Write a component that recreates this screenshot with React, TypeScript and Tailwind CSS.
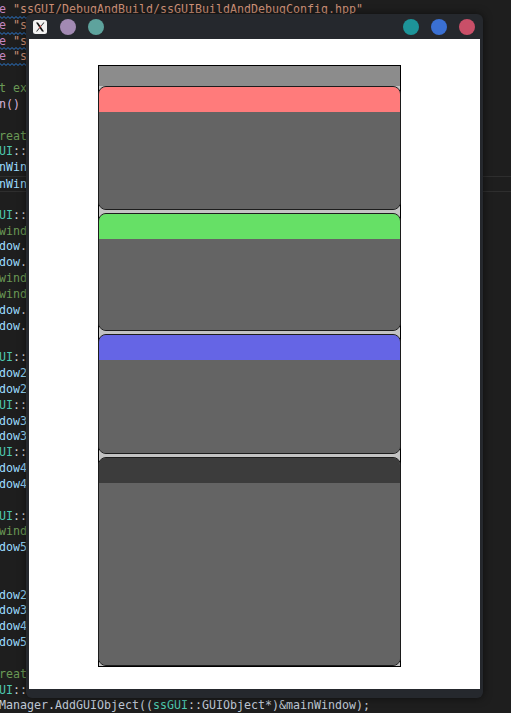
import React from "react";

type Tok = [string, string];

const K = "text-[#c586c0]";
const S = "text-[#ce9178]";
const C = "text-[#6a9955]";
const T = "text-[#4ec9b0]";
const V = "text-[#9cdcfe]";
const P = "text-[#d4d4d4]";
const F = "text-[#c0cad8]";
const B = "text-[#569cd6]";
const M = "text-[#d8b4dc]";

const ind = (s: string): Tok => [P, s];

const decl = (name: string): Tok[] => [ind("    "), [T, "ssGUI"], [P, "::"], [T, "Window"], [P, " "], [V, name], [P, ";"]];
const call = (name: string, fn: string, args: string): Tok[] => [ind("    "), [V, name], [P, "."], [F, fn], [P, args]];

const lines: Tok[][] = [
  [[K, "#include"], [S, ' "ssGUI/DebugAndBuild/ssGUIBuildAndDebugConfig.hpp"']],
  [[K, "#include"], [S, ' "ssGUI/HeaderGroups/StandardGroup.hpp"']],
  [[K, "#include"], [S, ' "ssGUI/Extensions/Layout.hpp"']],
  [[K, "#include"], [S, ' "ssGUI/Extensions/Border.hpp"']],
  [],
  [[C, "//Layout example"]],
  [[B, "int"], [P, " "], [M, "main()"]],
  [[P, "{"]],
  [[C, "    //Create the main window"]],
  [ind("    "), [T, "ssGUI"], [P, "::"], [T, "MainWindow"], [P, " "], [V, "mainWindow"], [P, ";"]],
  call("mainWindow", "SetSize", "(glm::vec2(450, 650));"),
  call("mainWindow", "AddExtension", "(new ssGUI::Extensions::Layout());"),
  [],
  decl("window"),
  [[C, "    // window.SetBackgroundColor(glm::u8vec4(140, 140, 140, 255));"]],
  call("window", "SetSize", "(glm::vec2(300, 600));"),
  call("window", "SetPosition", "(glm::vec2(70, 25));"),
  [[C, "    // window.AddExtension(new ssGUI::Extensions::Border());"]],
  [[C, "    // window.SetTitlebar(false);"]],
  call("window", "AddExtension", "(new ssGUI::Extensions::Layout());"),
  call("window", "SetBackgroundColor", "(glm::u8vec4(140, 140, 140, 255));"),
  [],
  decl("window2"),
  call("window2", "SetTitlebarColor", "(glm::u8vec4(255, 127, 127, 255));"),
  call("window2", "SetBackgroundColor", "(glm::u8vec4(100, 100, 100, 255));"),
  decl("window3"),
  call("window3", "SetTitlebarColor", "(glm::u8vec4(100, 230, 100, 255));"),
  call("window3", "SetBackgroundColor", "(glm::u8vec4(100, 100, 100, 255));"),
  decl("window4"),
  call("window4", "SetTitlebarColor", "(glm::u8vec4(100, 100, 230, 255));"),
  call("window4", "SetBackgroundColor", "(glm::u8vec4(100, 100, 100, 255));"),
  [],
  decl("window5"),
  [[C, "    // window5.SetTitlebarColor(glm::u8vec4(60, 60, 60, 255));"]],
  call("window5", "SetBackgroundColor", "(glm::u8vec4(100, 100, 100, 255));"),
  [],
  [],
  call("window2", "SetParent", "(&window);"),
  call("window3", "SetParent", "(&window);"),
  call("window4", "SetParent", "(&window);"),
  call("window5", "SetParent", "(&window);"),
  [],
  [[C, "    //Create the GUIManager, add the main window and start running"]],
  [ind("    "), [T, "ssGUI"], [P, "::"], [T, "ssGUIManager"], [P, " "], [V, "guiManager"], [P, ";"]],
  [ind("    "), [F, "guiManager"], [P, "."], [F, "AddGUIObject"], [F, "(("], [T, "ssGUI"], [P, "::"], [F, "GUIObject*)&mainWindow);"]],
];

function Squiggle() {
  let d = "M0 2.5";
  for (let x = 0; x < 80; x += 4) {
    d += ` L${x + 2} 0.5 L${x + 4} 2.5`;
  }
  return (
    <svg className="absolute left-0 bottom-[-1px]" width="80" height="3" viewBox="0 0 80 3">
      <path d={d} stroke="#2f7fd8" strokeWidth="1" fill="none" />
    </svg>
  );
}

function CodeLine({ toks, idx }: { toks: Tok[]; idx: number }) {
  const squiggle = idx <= 3;
  const current = idx === 11;
  return (
    <div
      className={
        "relative h-[15.84px] whitespace-pre " +
        (current ? "border-y border-[#2e2e2e] box-border" : "")
      }
    >
      {toks.length === 0 ? (
        <span> </span>
      ) : (
        toks.map((t, i) => (
          <span key={i} className={t[0]}>
            {t[1]}
          </span>
        ))
      )}
      {squiggle && <Squiggle />}
    </div>
  );
}

function XLogo() {
  return (
    <div className="w-[16px] h-[16px] flex items-center justify-center">
      <svg width="14" height="14" viewBox="0 0 14 14">
        <rect x="0" y="0" width="14" height="14" rx="2.5" fill="#f2f2f2" />
        <path d="M3 2.5 L5 2.5 L11 11.5 L9 11.5 Z" fill="#111" />
        <path d="M10.5 2.5 L11.4 2.5 L4 11.5 L3.1 11.5 Z" fill="#111" />
        <path d="M7.6 5.2 L8.4 5.9 L6.2 8.6 L5.6 7.9 Z" fill="#d9534f" />
      </svg>
    </div>
  );
}

function Dot({ color }: { color: string }) {
  return <div className={"w-[16px] h-[16px] rounded-full " + color} />;
}

function SubWindow({ title, h }: { title: string; h: string }) {
  return (
    <div className={"-mx-px flex flex-col rounded-[8px] border border-[#1c1c1c] overflow-hidden bg-[#646464] " + h}>
      <div className={"h-[25px] shrink-0 " + title} />
      <div className="flex-1 bg-[#646464]" />
    </div>
  );
}

export default function App() {
  return (
    <div className="relative w-[511px] h-[713px] overflow-hidden bg-[#1e1e1e]">
      <div
        className="ml-[-50px] pt-[2px] text-[11.63px] leading-[15.84px]"
        style={{ fontFamily: '"DejaVu Sans Mono", "Liberation Mono", monospace' }}
      >
        {lines.map((l, i) => (
          <CodeLine key={i} toks={l} idx={i} />
        ))}
      </div>

      <div className="absolute left-[26px] top-[14px] w-[457px] h-[684px] rounded-[6px] bg-[#25282d] shadow-[0_0_8px_rgba(0,0,0,0.55)] flex flex-col">
        <div className="h-[25px] shrink-0 flex items-center pl-[6px] pr-[8px]">
          <div className="flex items-center gap-[12px]">
            <XLogo />
            <Dot color="bg-[#a28ab3]" />
            <Dot color="bg-[#5ea39d]" />
          </div>
          <div className="ml-auto flex items-center gap-[12px]">
            <Dot color="bg-[#1d9499]" />
            <Dot color="bg-[#3a70d3]" />
            <Dot color="bg-[#c94f68]" />
          </div>
        </div>
        <div className="mx-[3px] h-[650px] bg-white pt-[26px] pl-[69px]">
          <div className="w-[303px] border border-black bg-[#8c8c8c] pt-[20px] flex flex-col">
            <div className="flex flex-col gap-[3px] bg-[#c3c3c3]">
              <SubWindow title="bg-[#ff7b7b]" h="h-[124px]" />
              <SubWindow title="bg-[#66e066]" h="h-[118px]" />
              <SubWindow title="bg-[#6565e5]" h="h-[120px]" />
              <SubWindow title="bg-[#3c3c3c]" h="h-[209px]" />
            </div>
          </div>
        </div>
      </div>
    </div>
  );
}
